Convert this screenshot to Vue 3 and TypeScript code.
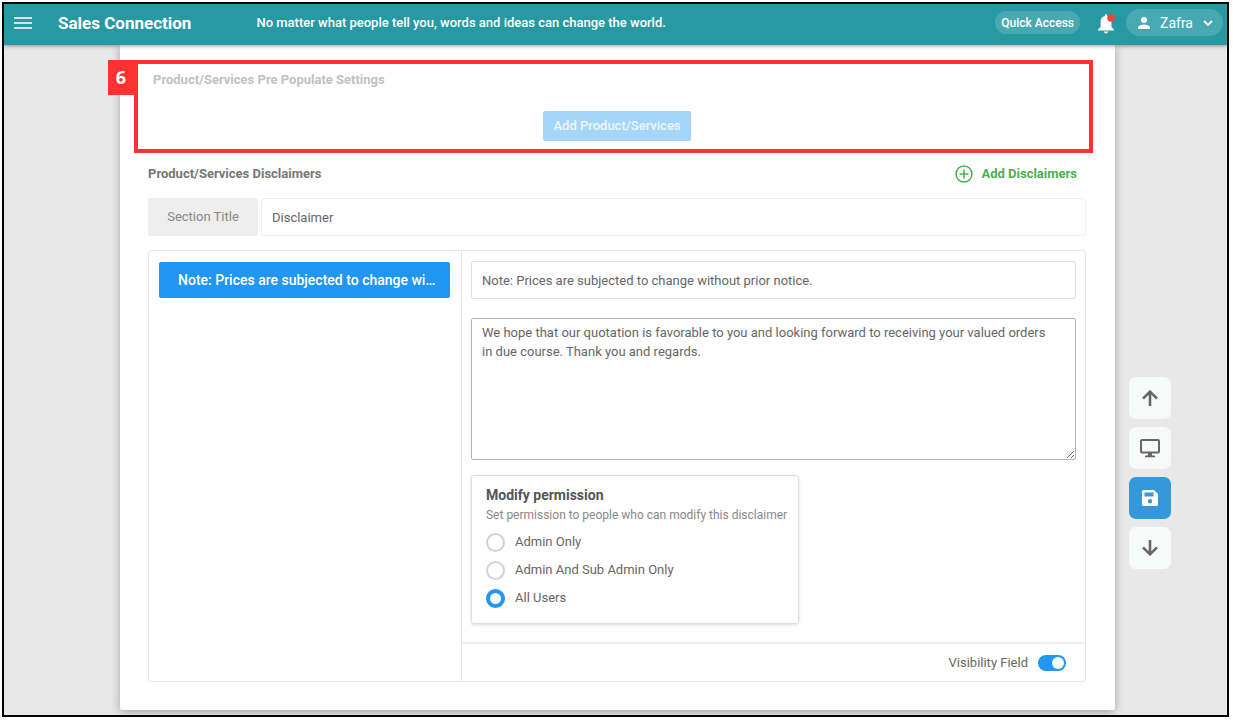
<script setup lang="ts">
import { ref } from 'vue'

const permissions: string[] = ['Admin Only', 'Admin And Sub Admin Only', 'All Users']
const permission = ref<string>('All Users')
const sectionTitle = ref<string>('Disclaimer')
const noteTitle = ref<string>('Note: Prices are subjected to change without prior notice.')
const noteBody = ref<string>(
  'We hope that our quotation is favorable to you and looking forward to receiving your valued orders in due course. Thank you and regards.'
)
const visible = ref<boolean>(true)
</script>

<template>
  <div class="window">
    <header class="topbar">
      <button class="icon-button" type="button" aria-label="Menu">
        <svg width="18" height="12" viewBox="0 0 18 12"><path d="M0 1h18M0 6h18M0 11h18" stroke="currentColor" stroke-width="1.700" /></svg>
      </button>
      <span class="brand">Sales Connection</span>
      <p class="quote">No matter what people tell you, words and ideas can change the world.</p>
      <button class="quick" type="button">Quick Access</button>
      <button class="icon-button bell" type="button" aria-label="Notifications">
        <svg width="18" height="22" viewBox="0 0 18 22">
          <path d="M7.800 3.500C7.800 2.700 8.200 2.200 9 2.200s1.200.5 1.200 1.300v.6c2.700.7 4.200 2.900 4.200 5.600V15l2.600 2.600v1H1v-1L3.600 15V9.700c0-2.700 1.500-4.900 4.200-5.600zM7 19.600h4c0 1.100-.9 2-2 2s-2-.9-2-2z" fill="currentColor" />
          <circle cx="14" cy="6" r="3.800" fill="#f44336" />
        </svg>
      </button>
      <button class="user" type="button">
        <svg width="12" height="12" viewBox="0 0 12 12"><circle cx="6" cy="3" r="3" fill="currentColor" /><path d="M0 12v-1.500C0 8.500 4 7.500 6 7.500s6 1 6 3V12z" fill="currentColor" /></svg>
        <span>Zafra</span>
        <svg width="10" height="6" viewBox="0 0 10 6"><path d="M1 1l4 4 4-4" fill="none" stroke="currentColor" stroke-width="1.800" /></svg>
      </button>
    </header>

    <div class="body">
      <main class="sheet">
        <section class="prepopulate">
          <span class="step">6</span>
          <h2 class="faded">Product/Services Pre Populate Settings</h2>
          <button class="add-product" type="button">Add Product/Services</button>
        </section>

        <section class="disclaimers">
          <div class="heading">
            <h2>Product/Services Disclaimers</h2>
            <button class="add-disclaimer" type="button">
              <svg width="18" height="18" viewBox="0 0 18 18"><circle cx="9" cy="9" r="8" fill="none" stroke="currentColor" stroke-width="1.500" /><path d="M9 4.500v9M4.500 9h9" stroke="currentColor" stroke-width="1.500" /></svg>
              Add Disclaimers
            </button>
          </div>

          <div class="title-row">
            <label for="section-title">Section Title</label>
            <input id="section-title" v-model="sectionTitle" type="text" />
          </div>

          <div class="panel">
            <nav class="notes">
              <button class="note" type="button">{{ noteTitle }}</button>
            </nav>
            <div class="editor">
              <div class="fields">
                <input v-model="noteTitle" class="note-title" type="text" aria-label="Disclaimer title" />
                <textarea v-model="noteBody" aria-label="Disclaimer text"></textarea>
                <fieldset class="permission" aria-labelledby="permission-title">
                  <h3 id="permission-title">Modify permission</h3>
                  <p>Set permission to people who can modify this disclaimer</p>
                  <label v-for="item in permissions" :key="item">
                    <input v-model="permission" type="radio" name="permission" :value="item" />
                    {{ item }}
                  </label>
                </fieldset>
              </div>
              <footer class="visibility">
                <label for="visibility">Visibility Field</label>
                <input id="visibility" v-model="visible" type="checkbox" role="switch" />
              </footer>
            </div>
          </div>
        </section>
      </main>

      <aside class="actions">
        <button type="button" aria-label="Scroll up">
          <svg width="16" height="16" viewBox="0 0 16 16"><path d="M8 16V2M1 8.700L8 1.700l7 7" fill="none" stroke="currentColor" stroke-width="2.600" /></svg>
        </button>
        <button type="button" aria-label="Preview">
          <svg width="22" height="20" viewBox="0 0 22 20"><rect x="2" y="2" width="18" height="12.500" rx="1" fill="none" stroke="currentColor" stroke-width="2" /><path d="M9 15h4v2.200l3 .6v1.400H6v-1.400l3-.6z" fill="currentColor" /></svg>
        </button>
        <button class="save" type="button" aria-label="Save">
          <svg width="16" height="16" viewBox="0 0 16 16"><path fill-rule="evenodd" d="M1.500 0H12l4 4v10.500a1.500 1.500 0 0 1-1.500 1.500h-13A1.500 1.500 0 0 1 0 14.500v-13A1.500 1.500 0 0 1 1.500 0zM2.500 2.500v4h9v-4zM8 9a2.200 2.200 0 1 0 0 4.400A2.200 2.200 0 0 0 8 9z" fill="currentColor" /></svg>
        </button>
        <button type="button" aria-label="Scroll down">
          <svg width="16" height="16" viewBox="0 0 16 16"><path d="M8 0v14M1 7.300l7 7 7-7" fill="none" stroke="currentColor" stroke-width="2.600" /></svg>
        </button>
      </aside>
    </div>
  </div>
</template>

<style>
body {
  background: #fff;
}
</style>

<style scoped>
* {
  box-sizing: border-box;
}

.window {
  margin: 2px 4px 3px 2px;
  border: 2px solid #000;
  background: #e8e8e8;
  color: #666;
  font-family: Roboto, "Liberation Sans", sans-serif;
  font-size: 13px;
  line-height: 20px;
  overflow: hidden;
}

h2,
h3,
p {
  margin: 0;
}

button,
input,
textarea {
  font: inherit;
  color: inherit;
}

button {
  border: 0;
  padding: 0;
  background: none;
  cursor: pointer;
}

svg {
  display: block;
  flex: none;
}

.topbar {
  position: relative;
  z-index: 1;
  display: flex;
  align-items: center;
  height: 41px;
  padding: 0 4px 4px 10px;
  background: #2899a3;
  color: #fff;
  box-shadow: 0 1px 4px rgba(0, 0, 0, 0.4);
}

.brand {
  margin-left: 26px;
  font-size: 17px;
  font-weight: 700;
}

.quote {
  flex: 1;
  margin-left: 65px;
  font-weight: 500;
}

.quick {
  height: 23px;
  padding: 0 6px;
  border-radius: 12px;
  background: #49a9b2;
  font-size: 12px;
  font-weight: 500;
}

.bell {
  margin: 0 11px 0 17px;
}

.user {
  display: flex;
  align-items: center;
  gap: 10px;
  height: 27px;
  padding: 0 10px 0 12px;
  border-radius: 14px;
  background: #49a9b2;
  font-size: 14px;
}

.body {
  display: flex;
}

.sheet {
  flex: 1;
  min-width: 0;
  margin: 0 14px 5px 116px;
  padding: 15px 29px 28px 28px;
  border-radius: 0 0 2px 2px;
  background: #fff;
  box-shadow: 0 2px 10px rgba(0, 0, 0, 0.3);
}

.prepopulate {
  position: relative;
  display: flex;
  flex-direction: column;
  gap: 21px;
  height: 93px;
  margin: 0 -7px 0 -14px;
  padding: 6px 3px 8px 10px;
  border: 4px solid #ff3131;
}

.step {
  position: absolute;
  top: -4px;
  right: calc(100% + 4px);
  width: 26px;
  height: 35px;
  background: #ff3131;
  color: #fff;
  font: 700 18px/35px "Open Sans", sans-serif;
  text-align: center;
}

h2 {
  font-size: 13px;
  font-weight: 700;
}

.faded {
  padding-left: 5px;
  color: #c1c1c1;
}

.add-product {
  align-self: center;
  flex: none;
  height: 30px;
  padding: 0 10px;
  border-radius: 2px;
  background: #a6d5fa;
  color: #edf7fe;
  font-weight: 500;
}

.heading {
  display: flex;
  align-items: center;
  justify-content: space-between;
  height: 42px;
  padding-right: 9px;
}

.heading h2 {
  color: #777;
}

.add-disclaimer {
  display: flex;
  align-items: center;
  gap: 8px;
  color: #4caf50;
  font-weight: 700;
}

.title-row {
  display: flex;
  gap: 3px;
  margin-top: 3px;
}

.title-row label {
  width: 110px;
  border-radius: 3px;
  background: #eee;
  color: #888;
  line-height: 38px;
  text-align: center;
}

.title-row input,
.note-title {
  flex: 1;
  min-width: 0;
  height: 38px;
  padding: 0 10px;
  border: 1px solid #f0f0f0;
  border-radius: 3px;
  background: #fff;
}

.panel {
  display: flex;
  margin-top: 14px;
  border: 1px solid #e6e6e6;
  border-radius: 3px;
}

.notes {
  flex: none;
  width: calc(100% / 3);
  padding: 11px 11px 11px 10px;
}

.note {
  width: 100%;
  height: 36px;
  padding: 0 14px 0 19px;
  border-radius: 2px;
  background: #2196f3;
  color: #fff;
  font-size: 14px;
  font-weight: 500;
  text-align: left;
  overflow: hidden;
  text-overflow: ellipsis;
  white-space: nowrap;
}

.editor {
  flex: 1;
  min-width: 0;
  border-left: 1px solid #e6e6e6;
}

.fields {
  display: flex;
  flex-direction: column;
  align-items: flex-start;
  padding: 10px 9px 18px;
}

.note-title {
  flex: none;
  width: 100%;
  border-color: #ddd;
}

textarea {
  width: 100%;
  height: 142px;
  margin: 19px 0 15px;
  padding: 4px 20px 4px 10px;
  border: 1px solid #b4b4b4;
  border-radius: 2px;
  background: #fff;
  line-height: 19px;
}

.permission {
  display: flex;
  flex-direction: column;
  width: 328px;
  height: 149px;
  min-width: 0;
  margin: 0;
  padding: 9px 14px;
  border: 1px solid #ddd;
  border-radius: 3px;
  box-shadow: 0 1px 3px rgba(0, 0, 0, 0.14);
}

h3 {
  color: #555;
  font-size: 14px;
  font-weight: 700;
}

.permission p {
  margin-bottom: 3px;
  color: #888;
  font-size: 12px;
  white-space: nowrap;
}

.permission label {
  display: flex;
  align-items: center;
  gap: 10px;
  height: 28px;
}

.permission input {
  appearance: none;
  width: 19px;
  height: 19px;
  margin: 0;
  border: 2px solid #ced4da;
  border-radius: 50%;
}

.permission input:checked {
  border: 4px solid #2196f3;
}

.visibility {
  display: flex;
  align-items: center;
  justify-content: flex-end;
  gap: 10px;
  height: 39px;
  padding-right: 19px;
  border-top: 2px solid #eee;
}

.visibility input {
  appearance: none;
  display: flex;
  width: 28px;
  height: 16px;
  margin: 0;
  padding: 2px;
  border-radius: 8px;
  background: #bbb;
}

.visibility input::before {
  content: "";
  width: 12px;
  height: 12px;
  border-radius: 50%;
  background: #fff;
}

.visibility input:checked {
  justify-content: flex-end;
  background: #2196f3;
}

.actions {
  display: flex;
  flex-direction: column;
  align-self: flex-end;
  gap: 8px;
  margin: 0 56px 146px 0;
}

.actions button {
  display: grid;
  place-items: center;
  width: 42px;
  height: 42px;
  border-radius: 7px;
  background: #f8faf9;
  color: #666;
}

.actions .save {
  background: #3498db;
  color: #fff;
}
</style>
